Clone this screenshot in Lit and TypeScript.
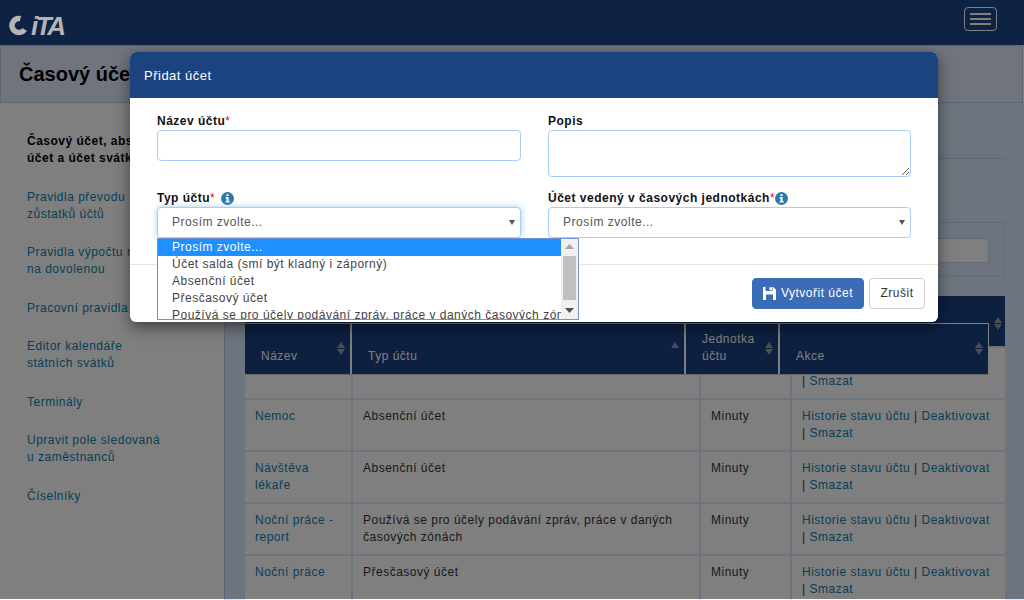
import { LitElement, html, css, svg } from "lit";
import { customElement } from "lit/decorators.js";

const sort = (up = "#8c8c8c", down = "#8c8c8c") => html`<svg class="sort" width="8" height="13" viewBox="0 0 8 13"><path d="M4 0L8 6H0Z" fill=${up}/><path d="M4 13L0 7H8Z" fill=${down}/></svg>`;
const info = html`<svg class="info" width="13" height="13" viewBox="0 0 13 13"><circle cx="6.5" cy="6.5" r="6.5" fill="#2d7aa8"/><path d="M5.4 2.2h2.2v1.8H5.4zM4.6 5h3v4h1v1.5H4.6V9h1V6.4h-1z" fill="#fff"/></svg>`;
const rows = [
  ["Jiné důvody", "Absenční účet"],
  ["Nemoc", "Absenční účet"],
  ["Návštěva lékaře", "Absenční účet"],
  ["Noční práce - report", "Používá se pro účely podávání zpráv, práce v daných časových zónách"],
  ["Noční práce", "Přesčasový účet"],
  ["Placené volno", "Absenční účet"],
];

@customElement("app-root")
export class AppRoot extends LitElement {
  static styles = css`
    :host { display: block; width: 1024px; height: 600px; overflow: hidden; position: relative; background: #fff; font: 12px/17px "Liberation Sans", Arial, sans-serif; letter-spacing: .5px; color: #333; }
    a { color: #0a7fb0; text-decoration: none; }
    .top { height: 45px; background: #1c4488; display: flex; align-items: flex-start; justify-content: space-between; box-sizing: border-box; padding: 7px 27px 0 9px; }
    .logo { position: relative; z-index: 11; margin-top: 8px; }
    .logo text { font: italic bold 26px "Liberation Sans", Arial, sans-serif; letter-spacing: -2.5px; fill: #b4b4b4; }
    .burger { width: 33px; height: 24px; box-sizing: border-box; border: 1px solid #fff; border-radius: 4px; display: flex; flex-direction: column; gap: 3px; align-items: center; justify-content: center; }
    .burger i { display: block; width: 21px; height: 2px; background: #fff; }
    .band { height: 58px; box-sizing: border-box; background: #dfe9fa; border: 1px solid #b6cdf2; padding: 17px 18px; font-size: 20px; line-height: 23px; font-weight: bold; letter-spacing: 0; color: #000; margin-right: 1px; }
    .body { display: flex; height: 498px; }
    .side { width: 224px; flex: none; box-sizing: border-box; padding: 30px 54px 0 27px; display: flex; flex-direction: column; gap: 21.5px; }
    .side b { color: #000; }
    .main { flex: 1; background: #dce8fb; border-left: 1px solid #b6cdf2; padding: 0 19px 0 20px; overflow: hidden; }
    .tabs { height: 55px; border-bottom: 1px solid #b6cdf2; }
    .filter { margin-top: 63px; height: 54px; box-sizing: border-box; border: 1px solid #c3d5f3; padding: 15px; margin-bottom: 20px; background: #dce8fb; }
    .filter div { height: 25px; background: #fff; border: 1px solid #c3d5f3; border-radius: 2px; box-sizing: border-box; }
    .wrap { position: relative; }
    table { border-collapse: collapse; table-layout: fixed; width: 760px; background: #fff; }
    thead th { height: 51px; background: #1a4080; padding: 0; position: relative; box-sizing: border-box; }
    thead .sort { position: absolute; right: 3px; top: 21px; }
    td { border: 2px solid #dce8fb; padding: 8px 10px; vertical-align: top; height: 34px; }
    td:first-child { border-left: 0; }
    td:last-child { border-right: 0; }
    .sticky { position: absolute; left: 0; top: 27px; width: 744px; height: 52px; display: grid; grid-template-columns: 107px 334px 94px 1fr; gap: 0; background: #fff; border-top: 1px solid #fff; border-right: 1px solid #fff; border-bottom: 1px solid #cfcfcf; box-sizing: border-box; column-gap: 0; }
    .sticky div { background: #1a4080; color: #fff; position: relative; padding: 0 16px 9px; display: flex; align-items: flex-end; box-sizing: border-box; margin-right: 2px; }
    .sticky div:last-child { margin-right: 0; }
    .sticky .sort { position: absolute; right: 5px; top: 18px; }
    .back { position: absolute; left: 0; top: 0; width: 1024px; height: 599px; background: rgba(0, 0, 0, .5); z-index: 10; }
    .modal { position: absolute; left: 130px; top: 52px; width: 808px; height: 270px; background: #fff; border-radius: 6px; box-shadow: 0 5px 15px rgba(0, 0, 0, .5); z-index: 12; display: flex; flex-direction: column; }
    .mh { height: 46px; flex: none; background: #1b437f; border-radius: 6px 6px 0 0; color: #fff; padding: 15px 14px 0; box-sizing: border-box; font-size: 13px; line-height: 17px; }
    .mb { flex: none; height: 167px; box-sizing: border-box; padding: 15px 27px 0; display: grid; grid-template-columns: 364px 363px; column-gap: 27px; grid-template-rows: 64px 60px; row-gap: 13px; border-bottom: 1px solid #e5e5e5; }
    label { display: flex; align-items: center; font-weight: bold; color: #111; height: 17px; }
    label s { color: #f00; text-decoration: none; font-weight: normal; }
    .info { margin-left: 6px; }
    .tight .info { margin-left: 0; }
    input, textarea { display: block; box-sizing: border-box; width: 100%; margin: 0; background: #fff; border: 1px solid #a9cdfb; border-radius: 4px; outline: 0; padding: 0; }
    input { height: 31px; }
    textarea { height: 47px; }
    .sel { position: relative; height: 31px; box-sizing: border-box; border: 1px solid #a9cdfb; border-radius: 4px; color: #555; padding: 6px 14px; background: #fff; }
    .sel::after { content: ""; position: absolute; right: 5px; top: 12px; border: 3.5px solid transparent; border-top: 5px solid #555; border-bottom: 0; }
    .sel.open { box-shadow: 0 0 6px rgba(102, 175, 233, .6); }
    .list { position: absolute; left: 157px; top: 238px; width: 422px; height: 82px; box-sizing: border-box; border: 1px solid #6f93d0; background: #fff; overflow: hidden; z-index: 13; display: flex; color: #444; }
    .opts { flex: 1; min-width: 0; }
    .opts div { height: 17px; padding-left: 14px; white-space: nowrap; overflow: hidden; }
    .opts .hl { background: #1e90ff; color: #fff; }
    .bar { width: 17px; flex: none; background: #f1f1f1; display: flex; flex-direction: column; align-items: center; position: relative; }
    .bar .t { width: 13px; height: 44px; background: #c0c0c0; margin-top: 0; position: absolute; top: 17px; }
    .bar svg { position: absolute; left: 4px; }
    .mf { flex: 1; display: flex; justify-content: flex-end; align-items: flex-start; gap: 5px; padding: 13px 13px 0 0; }
    button { font: inherit; letter-spacing: inherit; height: 31px; border-radius: 4px; box-sizing: border-box; display: flex; align-items: center; justify-content: center; margin: 0; padding: 0; }
    .pri { width: 112px; background: #3b6cb7; border: 1px solid #3b6cb7; color: #fff; gap: 5px; }
    .can { width: 56px; background: #fff; border: 1px solid #ccc; color: #333; }
  `;
  render() {
    const actions = html`<a>Historie stavu účtu</a> | <a>Deaktivovat</a> | <a>Smazat</a>`;
    return html`
      <div class="top">
        <svg class="logo" width="60" height="21" viewBox="0 0 60 21">
          <circle cx="10" cy="10.5" r="7" fill="none" stroke="#b4b4b4" stroke-width="5.5" stroke-dasharray="30 14" transform="rotate(35 10 10.5)"/>
          <text x="22" y="20">iTA</text>
        </svg>
        <div class="burger"><i></i><i></i><i></i></div>
      </div>
      <div class="band">Časový účet, absenční účet a účet svátků</div>
      <div class="body">
        <nav class="side">
          <b>Časový účet, absenční účet a účet svátků</b>
          <a>Pravidla převodu zůstatků účtů</a>
          <a>Pravidla výpočtu nároku na dovolenou</a>
          <a>Pracovní pravidla</a>
          <a>Editor kalendáře státních svátků</a>
          <a>Terminály</a>
          <a>Upravit pole sledovaná u zaměstnanců</a>
          <a>Číselníky</a>
        </nav>
        <main class="main">
          <div class="tabs"></div>
          <div class="filter"><div></div></div>
          <div class="wrap">
            <table>
              <colgroup><col style="width:107px"><col style="width:348px"><col style="width:91px"><col style="width:214px"></colgroup>
              <thead><tr><th></th><th></th><th></th><th>${sort("#9a9a9a", "#9a9a9a")}</th></tr></thead>
              <tbody>
                ${rows.map((r) => html`<tr><td><a>${r[0]}</a></td><td>${r[1]}</td><td>Minuty</td><td>${actions}</td></tr>`)}
              </tbody>
            </table>
            <div class="sticky">
              <div>Název${sort("#9a9a9a", "#9a9a9a")}</div>
              <div>Typ účtu${sort("#8f8fe0", "transparent")}</div>
              <div>Jednotka<br />účtu${sort("#9a9a9a", "#9a9a9a")}</div>
              <div>Akce${sort("#9a9a9a", "#9a9a9a")}</div>
            </div>
          </div>
        </main>
      </div>
      <div class="back"></div>
      <div class="modal">
        <div class="mh">Přidat účet</div>
        <div class="mb">
          <div><label>Název účtu<s>*</s></label><input /></div>
          <div><label>Popis</label><textarea></textarea></div>
          <div><label>Typ účtu<s>*</s>${info}</label><div class="sel open">Prosím zvolte...</div></div>
          <div><label class="tight">Účet vedený v časových jednotkách<s>*</s>${info}</label><div class="sel">Prosím zvolte...</div></div>
        </div>
        <div class="mf">
          <button class="pri"><svg width="13" height="13" viewBox="0 0 13 13"><path fill-rule="evenodd" d="M0 0h2.5v4h7V0h.8L13 2.7V13H0zM3 7.5V13h7V7.5zM6.5.3H9v3H6.5z" fill="#fff"/></svg>Vytvořit účet</button>
          <button class="can">Zrušit</button>
        </div>
      </div>
      <div class="list">
        <div class="opts">
          <div class="hl">Prosím zvolte...</div>
          <div>Účet salda (smí být kladný i záporný)</div>
          <div>Absenční účet</div>
          <div>Přesčasový účet</div>
          <div>Používá se pro účely podávání zpráv, práce v daných časových zónách</div>
        </div>
        <div class="bar">
          <svg style="top:5px" width="9" height="6" viewBox="0 0 9 6"><path d="M4.5 0L9 5H0Z" fill="#a3a3a3"/></svg>
          <div class="t"></div>
          <svg style="top:69px" width="9" height="6" viewBox="0 0 9 6"><path d="M4.5 5L0 0H9Z" fill="#505050"/></svg>
        </div>
      </div>
    `;
  }
}
